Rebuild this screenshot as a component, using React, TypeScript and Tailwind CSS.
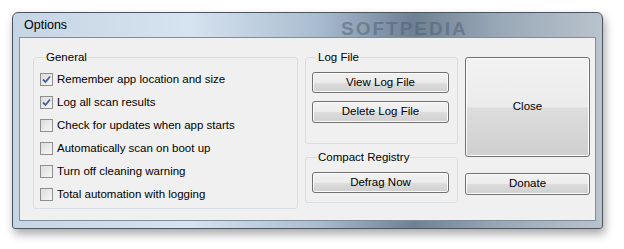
import type * as React from 'react';

const font = { fontFamily: '"Segoe UI", "Liberation Sans", Arial, sans-serif' };

const CheckRow: React.FC<{ label: string; checked?: boolean }> = ({ label, checked }) => (
  <div className="flex items-center h-[23px]">
    <span className="w-[13px] h-[13px] border border-[#8e8f8f] bg-[linear-gradient(135deg,#dcdcdc,#f6f6f6)] flex items-center justify-center shrink-0">
      {checked && (
        <svg width="9" height="9" viewBox="0 0 9 9">
          <path d="M1 4.5 L3.5 7 L8 1.5" fill="none" stroke="#4a5f97" strokeWidth="1.8" />
        </svg>
      )}
    </span>
    <span className="ml-[4px] text-[11.5px] text-black leading-none">{label}</span>
  </div>
);

const WinButton: React.FC<{ label: string; className?: string }> = ({ label, className }) => (
  <button
    className={`border border-[#707070] rounded-[3px] text-[11.5px] text-black bg-[linear-gradient(180deg,#f2f2f2_0%,#ebebeb_50%,#dddddd_51%,#cfcfcf_100%)] shadow-[inset_0_0_0_1px_#fcfcfc] flex items-center justify-center shrink-0 ${className ?? ''}`}
  >
    {label}
  </button>
);

const Group: React.FC<{ title: string; className?: string; children?: React.ReactNode }> = ({ title, className, children }) => (
  <fieldset className={`border border-[#d5dfe5] rounded-[3px] ${className ?? ''}`}>
    <legend className="ml-[5px] px-[1px] text-[11.5px] leading-[15px] text-black">{title}</legend>
    {children}
  </fieldset>
);

export default function App() {
  return (
    <div className="w-[624px] h-[249px] bg-white overflow-hidden pt-[12px] pl-[12px]" style={font}>
      <div className="w-[591px] h-[217px] rounded-t-[6px] rounded-b-[3px] border border-[#4b5560] shadow-[2px_5px_10px_rgba(0,0,0,0.35)] bg-[linear-gradient(90deg,#c6d5e4_0%,#d6e3f0_30%,#a9bccf_52%,#6e8093_68%,#98a7b6_82%,#b9c3cd_100%)] flex flex-col px-[6px] pb-[7px]">
        {/* Title bar */}
        <div className="h-[24px] flex items-center relative">
          <span className="ml-[5px] text-[12.5px] text-black">Options</span>
          <span className="absolute left-[322px] top-[2px] text-[19px] font-bold tracking-[2px] text-[#4d5f72] opacity-50" style={{ fontFamily: '"Liberation Sans", sans-serif' }}>
            SOFTPEDIA
          </span>
        </div>

        {/* Client area */}
        <div className="flex-1 bg-[#f0f0f0] border border-[#7f8d9c] flex pl-[13px] pt-[12px]">
          <Group title="General" className="w-[265px] h-[159px] flex flex-col px-[6px] pt-[3px]">
            <CheckRow label="Remember app location and size" checked />
            <CheckRow label="Log all scan results" checked />
            <CheckRow label="Check for updates when app starts" />
            <CheckRow label="Automatically scan on boot up" />
            <CheckRow label="Turn off cleaning warning" />
            <CheckRow label="Total automation with logging" />
          </Group>

          <div className="ml-[7px] w-[153px] flex flex-col">
            <Group title="Log File" className="h-[94px] flex flex-col pl-[6px] pt-[7px]">
              <WinButton label="View Log File" className="w-[137px] h-[21px]" />
              <WinButton label="Delete Log File" className="w-[137px] h-[22px] mt-[8px]" />
            </Group>
            <Group title="Compact Registry" className="h-[53px] mt-[6px] pl-[6px] pt-[7px]">
              <WinButton label="Defrag Now" className="w-[137px] h-[21px]" />
            </Group>
          </div>

          <div className="ml-[7px] pt-[7px] flex flex-col">
            <WinButton label="Close" className="w-[125px] h-[100px]" />
            <WinButton label="Donate" className="w-[125px] h-[22px] mt-[16px]" />
          </div>
        </div>
      </div>
    </div>
  );
}
